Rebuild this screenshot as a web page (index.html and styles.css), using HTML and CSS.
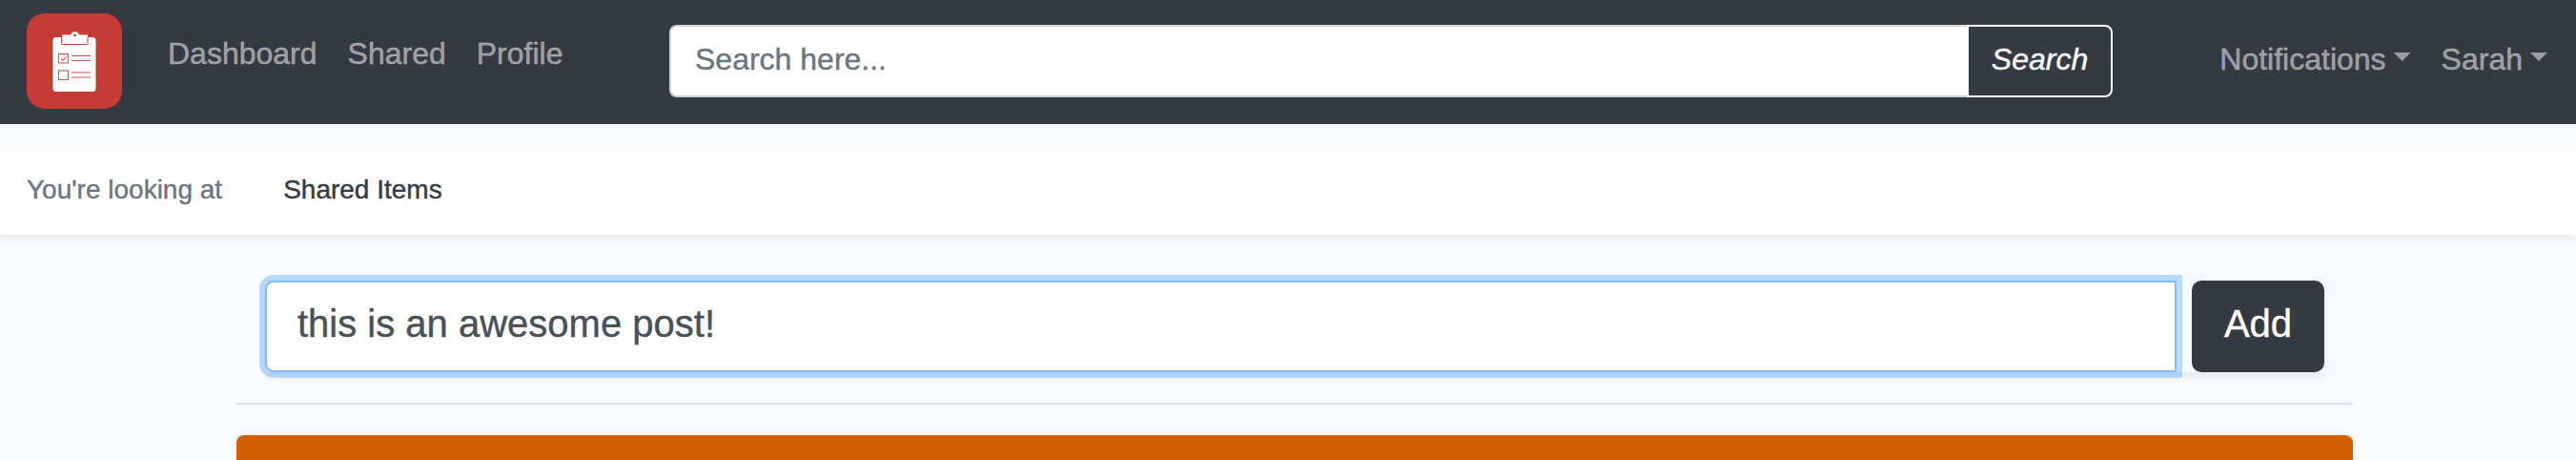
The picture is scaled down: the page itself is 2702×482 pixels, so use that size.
FILE: index.html
```html
<!DOCTYPE html>
<html lang="en">
<head>
<meta charset="utf-8">
<title>Shared Items</title>
<link rel="stylesheet" href="styles.css">
</head>
<body>
<nav class="navbar">
  <a class="brand" href="#">
    <svg class="logo" width="100" height="100" viewBox="0 0 100 100">
      <rect width="100" height="100" rx="19" fill="#c43c35"/>
      <rect x="27.5" y="25" width="45" height="57" rx="3.5" fill="#fff"/>
      <path d="M37 22.500H46.200A4.500 4.500 0 0 1 54.800 22.500H64V31.500Q64 32.500 63 32.500H38Q37 32.500 37 31.500Z" fill="#fff"/>
      <path d="M36.500 25V31.500Q36.500 32.500 37.500 32.500H63Q64 32.500 64 31.500V25" fill="none" stroke="#c43c35" stroke-width="1"/>
      <circle cx="50.500" cy="23" r="1.300" fill="#c43c35"/>
      <g fill="none" stroke="#c95750" stroke-width="1.100">
        <rect x="33.500" y="42.500" width="10" height="9.500"/>
        <rect x="33.500" y="60" width="10" height="9.500"/>
        <path d="M36 47.500l2 2 4-4.500M47 44.500h20M47 49.500h20M47 62h20M47 67h20"/>
      </g>
    </svg>
  </a>
  <div class="nav-main">
    <a href="#">Dashboard</a>
    <a href="#">Shared</a>
    <a href="#">Profile</a>
  </div>
  <form class="search">
    <input class="search-input" type="text" placeholder="Search here...">
    <button class="search-button" type="button">Search</button>
  </form>
  <div class="nav-user">
    <a class="dropdown" href="#">Notifications</a>
    <a class="dropdown" href="#">Sarah</a>
  </div>
</nav>
<div class="subnav">
  <span class="subnav-label">You're looking at</span>
  <span class="subnav-current">Shared Items</span>
</div>
<main class="container">
  <form class="post-form">
    <input class="post-input" type="text" value="this is an awesome post!">
    <button class="post-button" type="button">Add</button>
  </form>
  <hr class="divider">
  <section class="card"></section>
</main>
</body>
</html>
```
FILE: styles.css
```css
* {
  box-sizing: border-box;
}

body {
  margin: 0;
  background: #f8fafc;
  font: 32px/48px "Liberation Sans", Arial, sans-serif;
  color: #343a40;
  -webkit-text-stroke: 0.4px;
}

a {
  color: inherit;
  text-decoration: none;
}

input,
button {
  margin: 0;
  font: inherit;
  outline: none;
  -webkit-text-stroke: 0.4px;
}

.navbar {
  display: flex;
  height: 130px;
  padding: 14px 30px 14px 28px;
  background: #353a41;
  color: rgba(255, 255, 255, 0.5);
}

.logo {
  display: block;
}

.nav-main {
  display: flex;
  gap: 32px;
  width: 526px;
  margin-left: 48px;
  padding-top: 18px;
}

.search {
  display: flex;
  width: 1514px;
  height: 76px;
  margin-top: 12px;
}

.search-input {
  flex: 1;
  min-width: 0;
  padding: 0 24px 4px 25px;
  border: 2px solid #ced4da;
  border-right: 0;
  border-radius: 8px 0 0 8px;
  background: #fff;
}

.search-input::placeholder {
  color: #6c757d;
  opacity: 1;
}

.search-button {
  width: 153px;
  padding: 0 0 4px;
  border: 2px solid #f8fafc;
  border-radius: 0 8px 8px 0;
  background: #353a41;
  color: #f8fafc;
  font-style: italic;
}

.nav-user {
  display: flex;
  gap: 32px;
  margin-left: auto;
  padding-top: 24px;
}

.dropdown {
  display: flex;
}

.dropdown::after {
  content: "";
  width: 18px;
  height: 9px;
  margin: 17px 0 0 8px;
  background: currentColor;
  clip-path: polygon(0 0, 100% 0, 50% 100%);
}

.subnav {
  display: flex;
  gap: 64px;
  height: 88px;
  margin-top: 28px;
  padding: 20px 28px;
  background: #fff;
  box-shadow: 0 4px 8px rgba(0, 0, 0, 0.075);
  font-size: 28px;
  line-height: 42px;
}

.subnav-label {
  color: #6c757d;
}

.container {
  width: 2220px;
  margin: 48px 0 0 248px;
}

.post-form {
  display: flex;
  gap: 16px;
  height: 96px;
  margin: 0 30px;
  box-shadow: 0 4px 8px rgba(0, 0, 0, 0.075);
}

.post-input {
  flex: 1;
  min-width: 0;
  padding: 0 32px 6px;
  border: 2px solid #80bdff;
  border-radius: 9px 0 0 9px;
  background: #fff;
  box-shadow: 0 0 0 6px rgba(0, 123, 255, 0.25);
  color: #495057;
  font-size: 40px;
}

.post-button {
  width: 139px;
  padding: 0 0 6px;
  border: 0;
  border-radius: 10px;
  background: #353a41;
  color: #fff;
  font-size: 40px;
}

.divider {
  height: 2px;
  margin: 32px 0;
  border: 0;
  background: rgba(0, 0, 0, 0.1);
}

.card {
  height: 26px;
  border-radius: 8px 8px 0 0;
  background: #d26002;
  box-shadow: 0 0 8px rgba(0, 0, 0, 0.06);
}
```
